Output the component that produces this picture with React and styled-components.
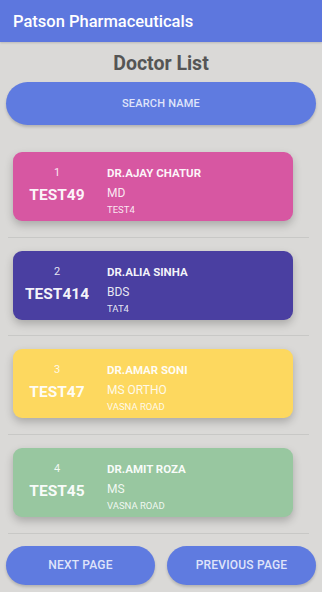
import React from "react";
import styled, { createGlobalStyle } from "styled-components";

const Global = createGlobalStyle`
  html, body { margin: 0; padding: 0; background: #dad9d7; }
  body { font-family: Roboto, "Noto Sans", Arial, sans-serif; }
  * { box-sizing: border-box; }
`;

const Page = styled.div`
  width: 322px;
  min-height: 592px;
  background: #dad9d7;
  display: flex;
  flex-direction: column;
`;

const Header = styled.div`
  height: 42px;
  background: #5d77de;
  color: #fff;
  font-size: 16.5px;
  font-weight: 500;
  display: flex;
  align-items: center;
  padding-left: 13px;
  box-shadow: 0 1px 2px rgba(0, 0, 0, 0.15);
`;

const Title = styled.h1`
  margin: 0;
  height: 40px;
  display: flex;
  align-items: center;
  justify-content: center;
  font-size: 19.5px;
  font-weight: 700;
  color: #555555;
  padding-top: 2px;
`;

const PillButton = styled.button`
  border: none;
  background: #5f7be0;
  color: #dfe4fa;
  font-family: Roboto, Arial, sans-serif;
  font-weight: 500;
  font-size: ${(p) => p.$size || 12}px;
  border-radius: 22px;
  height: ${(p) => p.$h || 39}px;
  letter-spacing: 0.2px;
  box-shadow: 0 2px 3px rgba(0, 0, 0, 0.18);
  padding: 0;
`;

const SearchButton = styled(PillButton)`
  margin: 0 6px;
  width: 310px;
`;

const List = styled.div`
  margin-top: 14px;
  display: flex;
  flex-direction: column;
`;

const Item = styled.div`
  margin: 0 13px 0 8px;
  padding: 13px 16px 15.7px 5px;
  border-bottom: 1px solid #c8c8c6;
`;

const Card = styled.div`
  height: 69px;
  border-radius: 9px;
  background: ${(p) => p.$bg};
  color: rgba(255, 255, 255, 0.88);
  display: flex;
  box-shadow: 0 4px 8px rgba(0, 0, 0, 0.22);
`;

const Left = styled.div`
  width: 88px;
  display: flex;
  flex-direction: column;
  align-items: center;
  padding-top: 13px;
`;

const Num = styled.div`
  font-size: 11px;
  line-height: 16px;
`;

const Code = styled.div`
  font-size: 15.5px;
  font-weight: 700;
  line-height: 20px;
  margin-top: 4px;
  color: rgba(255, 255, 255, 0.95);
`;

const Right = styled.div`
  padding-left: 6px;
  padding-top: 14px;
  display: flex;
  flex-direction: column;
`;

const Name = styled.div`
  font-size: 11.5px;
  font-weight: 700;
  line-height: 14px;
  color: rgba(255, 255, 255, 0.95);
`;

const Degree = styled.div`
  font-size: 12px;
  line-height: 14px;
  margin-top: 6px;
`;

const Area = styled.div`
  font-size: 9.5px;
  line-height: 12px;
  margin-top: 4px;
`;

const Footer = styled.div`
  display: flex;
  justify-content: space-between;
  padding: 12px 6px 0 6px;
`;

const PageButton = styled(PillButton)`
  width: 149px;
`;

const doctors = [
  { n: 1, code: "TEST49", name: "DR.AJAY CHATUR", deg: "MD", area: "TEST4", bg: "#d757a2" },
  { n: 2, code: "TEST414", name: "DR.ALIA SINHA", deg: "BDS", area: "TAT4", bg: "#4a3fa1" },
  { n: 3, code: "TEST47", name: "DR.AMAR SONI", deg: "MS ORTHO", area: "VASNA ROAD", bg: "#fdd85f" },
  { n: 4, code: "TEST45", name: "DR.AMIT ROZA", deg: "MS", area: "VASNA ROAD", bg: "#98c7a0" },
];

export default function App() {
  return (
    <Page>
      <Global />
      <Header>Patson Pharmaceuticals</Header>
      <Title>Doctor List</Title>
      <SearchButton $h={43} $size={11}>SEARCH NAME</SearchButton>
      <List>
        {doctors.map((d) => (
          <Item key={d.n}>
            <Card $bg={d.bg}>
              <Left>
                <Num>{d.n}</Num>
                <Code>{d.code}</Code>
              </Left>
              <Right>
                <Name>{d.name}</Name>
                <Degree>{d.deg}</Degree>
                <Area>{d.area}</Area>
              </Right>
            </Card>
          </Item>
        ))}
      </List>
      <Footer>
        <PageButton>NEXT PAGE</PageButton>
        <PageButton>PREVIOUS PAGE</PageButton>
      </Footer>
    </Page>
  );
}
